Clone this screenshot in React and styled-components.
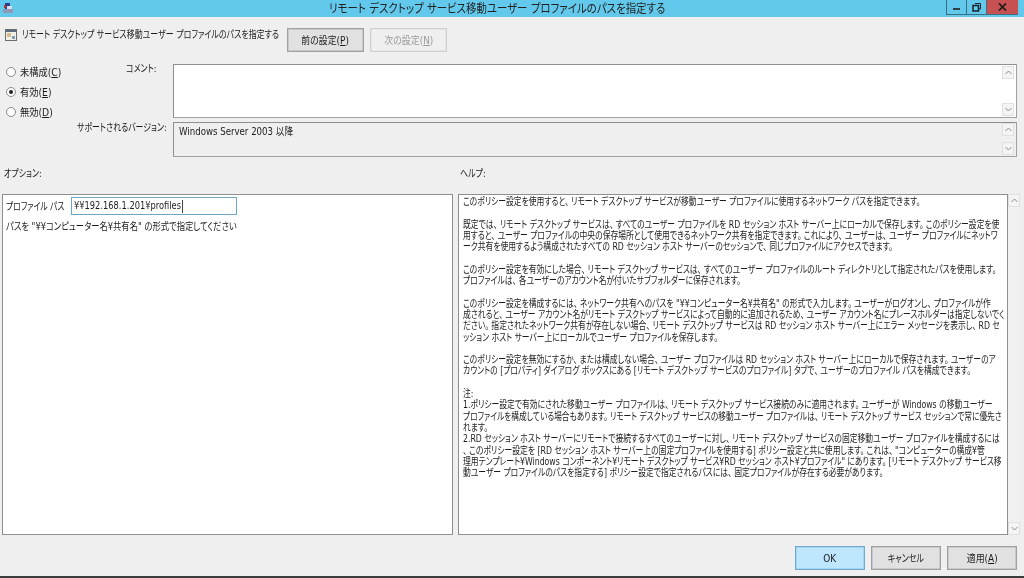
import React from 'react';
import styled, { createGlobalStyle } from 'styled-components';

const GlobalStyle = createGlobalStyle`
  html, body {
    margin: 0;
    padding: 0;
    background: #efefef;
  }
  * {
    box-sizing: border-box;
  }
`;

const Window = styled.div`
  width: 1024px;
  height: 578px;
  display: flex;
  flex-direction: column;
  overflow: hidden;
  background: #efefef;
  border-bottom: 2px solid #3c3c3c;
  color: #1c1c1c;
  font-family: "DejaVu Sans", "Noto Sans CJK JP", sans-serif;
  font-feature-settings: "palt";
  font-size: 10.5px;
  line-height: 12px;
  filter: blur(0.3px);
`;

// Meiryo UI has tall narrow kana, so every label is squeezed sideways
const Narrow = styled.span`
  display: inline-block;
  white-space: nowrap;
  transform: scaleX(${props => props.$x || 0.76});
  transform-origin: ${props => props.$center ? 'center' : 'left'};
`;

const Punct = styled.span`
  padding-right: 3px;
`;

const TitleBar = styled.div`
  height: 17px;
  flex: none;
  display: flex;
  align-items: flex-start;
  background: #63c9ec;
  padding: 0 6px 0 2px;
`;

const TitleIcon = styled.svg`
  width: 12px;
  height: 12px;
  margin-top: 2px;
  flex: none;
`;

const TitleText = styled.div`
  flex: 1;
  display: flex;
  justify-content: center;
  font-size: 12px;
  line-height: 18px;
  padding-left: 34px;
  color: #222;
`;

const WindowButtons = styled.div`
  display: flex;
  height: 15px;
  flex: none;
  border: 1px solid #3f6d80;
  border-top: 0;
  border-right: 0;
`;

const WindowButton = styled.div`
  width: ${props => props.$wide ? '31px' : '20px'};
  display: flex;
  align-items: center;
  justify-content: center;
  background: ${props => props.$close ? '#c75050' : 'transparent'};
  border-right: ${props => props.$close ? '0' : '1px solid #3f6d80'};
`;

const HeaderRow = styled.div`
  height: 47px;
  flex: none;
  display: flex;
  align-items: flex-start;
  padding: 11px 0 0 5px;
`;

const PolicyIcon = styled.svg`
  width: 12px;
  height: 12px;
  margin-top: 1px;
  flex: none;
`;

const PolicyName = styled.div`
  width: 270px;
  flex: none;
  padding-left: 5px;
`;

const NavButtons = styled.div`
  display: flex;
  gap: 6px;
`;

const Button = styled.div`
  width: ${props => props.$width || 70}px;
  height: 24px;
  display: flex;
  align-items: center;
  justify-content: center;
  background: ${props => props.$primary ? '#bee6fd' : props.$disabled ? '#efefef' : '#e1e1e1'};
  border: 1px solid ${props => props.$primary ? '#6fa9cf' : props.$disabled ? '#d0d0d0' : '#a0a0a0'};
  color: ${props => props.$disabled ? '#9a9a9a' : 'inherit'};
  box-shadow: inset 0 0 0 0.5px ${props => props.$primary ? '#8ec3e2' : props.$disabled ? '#dcdcdc' : '#b4b4b4'};
`;

const Underline = styled.span`
  text-decoration: underline;
  text-underline-offset: 1px;
`;

const SettingsRow = styled.div`
  display: flex;
  flex: none;
`;

const RadioGroup = styled.div`
  width: 70px;
  flex: none;
  display: flex;
  flex-direction: column;
  gap: 8px;
  padding: 2px 0 0 6px;
`;

const RadioRow = styled.div`
  display: flex;
  align-items: center;
  gap: 4px;
  height: 12px;
`;

const RadioDot = styled.span`
  width: 10px;
  height: 10px;
  flex: none;
  display: flex;
  align-items: center;
  justify-content: center;
  border-radius: 50%;
  background: #fff;
  border: 1px solid #8a8a8a;

  &::after {
    content: '';
    width: 4px;
    height: 4px;
    border-radius: 50%;
    background: ${props => props.$checked ? '#222' : 'transparent'};
  }
`;

const FieldGrid = styled.div`
  display: grid;
  grid-template-columns: 103px 844px;
  grid-template-rows: 54px 35px;
  row-gap: 4px;
`;

const FieldLabel = styled.div`
  padding-left: ${props => props.$left}px;
  margin-top: ${props => props.$lift ? -props.$lift : 0}px;
  overflow: visible;
  width: 103px;
`;

const FieldBox = styled.div`
  display: flex;
  justify-content: space-between;
  background: ${props => props.$white ? '#fff' : '#efefef'};
  border: 1px solid #a0a0a0;
  border-top-color: #8f8f8f;
  border-left-color: #8f8f8f;
  padding: ${props => props.$white ? '1px' : '0'} 1px 1px 1px;
`;

const BoxText = styled.div`
  padding: 2px 0 0 4px;
  overflow: visible;
  width: 300px;
`;

const ScrollBar = styled.div`
  width: 12px;
  flex: none;
  display: flex;
  flex-direction: column;
  justify-content: space-between;
  background: ${props => props.$plain ? '#f0f0f0' : '#fff'};
  margin-right: ${props => props.$inset || 0}px;
`;

const ScrollButton = styled.div`
  height: 13px;
  display: flex;
  align-items: center;
  justify-content: center;
  background: #f4f4f4;
  border: 1px solid #e0e0e0;
`;

const Chevron = ({ down }) => (
  <svg width="7" height="5" viewBox="0 0 7 5">
    <path d={down ? 'M0.5 1 L3.5 4 L6.5 1' : 'M0.5 4 L3.5 1 L6.5 4'} fill="none" stroke="#8a8a8a" strokeWidth="1" />
  </svg>
);

const Scroller = ({ inset, plain }) => (
  <ScrollBar $inset={inset} $plain={plain}>
    <ScrollButton><Chevron /></ScrollButton>
    <ScrollButton><Chevron down /></ScrollButton>
  </ScrollBar>
);

const SectionLabels = styled.div`
  height: 37px;
  flex: none;
  display: flex;
  padding: 10px 0 0 4px;
`;

const SectionLabel = styled.div`
  width: ${props => props.$width}px;
`;

const Panels = styled.div`
  height: 341px;
  flex: none;
  display: flex;
  gap: 5px;
  padding-left: 2px;
`;

const OptionsPanel = styled.div`
  width: 451px;
  background: #fff;
  border: 1px solid #8f8f8f;
  padding: 2px 0 0 3px;
`;

const PathRow = styled.div`
  display: flex;
  align-items: center;
`;

const PathLabel = styled.div`
  width: 65px;
  flex: none;
`;

const PathInput = styled.div`
  width: 166px;
  height: 18px;
  display: flex;
  align-items: center;
  padding-left: 2px;
  border: 1px solid #6fa5c8;
`;

const Caret = styled.span`
  display: inline-block;
  width: 1px;
  height: 13px;
  margin-left: 1px;
  vertical-align: middle;
  background: #111;
`;

const PathHint = styled.div`
  margin-top: 5px;
`;

const HelpWrap = styled.div`
  width: 561px;
  display: flex;
`;

const HelpPanel = styled.div`
  width: 550px;
  flex: none;
  background: #fff;
  border: 1px solid #8f8f8f;
  padding: 1px 0 0 4px;
  font-size: 10.4px;
  line-height: 11.3px;
`;

const HelpLine = styled.div`
  height: 11.3px;
`;

const Footer = styled.div`
  flex: 1;
  display: flex;
  justify-content: flex-end;
  gap: 6px;
  padding: 11px 7px 0 0;
`;

const helpLines = [
  'このポリシー設定を使用すると、リモート デスクトップ サービスが移動ユーザー プロファイルに使用するネットワーク パスを指定できます。',
  '',
  '既定では、リモート デスクトップ サービスは、すべてのユーザー プロファイルを RD セッション ホスト サーバー上にローカルで保存します。このポリシー設定を使',
  '用すると、ユーザー プロファイルの中央の保存場所として使用できるネットワーク共有を指定できます。これにより、ユーザーは、ユーザー プロファイルにネットワ',
  'ーク共有を使用するよう構成されたすべての RD セッション ホスト サーバーのセッションで、同じプロファイルにアクセスできます。',
  '',
  'このポリシー設定を有効にした場合、リモート デスクトップ サービスは、すべてのユーザー プロファイルのルート ディレクトリとして指定されたパスを使用します。',
  'プロファイルは、各ユーザーのアカウント名が付いたサブフォルダーに保存されます。',
  '',
  'このポリシー設定を構成するには、ネットワーク共有へのパスを "¥¥コンピューター名¥共有名" の形式で入力します。ユーザーがログオンし、プロファイルが作',
  '成されると、ユーザー アカウント名がリモート デスクトップ サービスによって自動的に追加されるため、ユーザー アカウント名にプレースホルダーは指定しないでく',
  'ださい。指定されたネットワーク共有が存在しない場合、リモート デスクトップ サービスは RD セッション ホスト サーバー上にエラー メッセージを表示し、RD セ',
  'ッション ホスト サーバー上にローカルでユーザー プロファイルを保存します。',
  '',
  'このポリシー設定を無効にするか、または構成しない場合、ユーザー プロファイルは RD セッション ホスト サーバー上にローカルで保存されます。ユーザーのア',
  'カウントの [プロパティ] ダイアログ ボックスにある [リモート デスクトップ サービスのプロファイル] タブで、ユーザーのプロファイル パスを構成できます。',
  '',
  '注:',
  '1.ポリシー設定で有効にされた移動ユーザー プロファイルは、リモート デスクトップ サービス接続のみに適用されます。ユーザーが Windows の移動ユーザー',
  'プロファイルを構成している場合もあります。リモート デスクトップ サービスの移動ユーザー プロファイルは、リモート デスクトップ サービス セッションで常に優先さ',
  'れます。',
  '2.RD セッション ホスト サーバーにリモートで接続するすべてのユーザーに対し、リモート デスクトップ サービスの固定移動ユーザー プロファイルを構成するには',
  '、このポリシー設定を [RD セッション ホスト サーバー上の固定プロファイルを使用する] ポリシー設定と共に使用します。これは、"コンピューターの構成¥管',
  '理用テンプレート¥Windows コンポーネント¥リモート デスクトップ サービス¥RD セッション ホスト¥プロファイル" にあります。[リモート デスクトップ サービス移',
  '動ユーザー プロファイルのパスを指定する] ポリシー設定で指定されるパスには、固定プロファイルが存在する必要があります。'
];

// 、 and 。 keep their full width in the original font, palt would close them up
const withPunct = (line) =>
  line.split(/(?<=[、。])/).map((part, i) =>
    /[、。]$/.test(part)
      ? <React.Fragment key={i}>{part.slice(0, -1)}<Punct>{part.slice(-1)}</Punct></React.Fragment>
      : <React.Fragment key={i}>{part}</React.Fragment>
  );

const App = () => (
  <>
    <GlobalStyle />
    <Window>
      <TitleBar>
        <TitleIcon viewBox="0 0 12 12">
          <rect x="1" y="7" width="10" height="4" fill="#8c9bb5" />
          <rect x="3" y="1" width="5" height="6" fill="#2b3f8f" />
          <rect x="5" y="4" width="5" height="3" fill="#d8dfe8" />
          <rect x="2" y="3" width="2" height="3" fill="#a33" />
        </TitleIcon>
        <TitleText>
          <Narrow $x={0.87} $center>リモート デスクトップ サービス移動ユーザー プロファイルのパスを指定する</Narrow>
        </TitleText>
        <WindowButtons>
          <WindowButton>
            <svg width="8" height="8" viewBox="0 0 8 8"><rect x="0" y="5" width="7" height="2" fill="#2c3e46" /></svg>
          </WindowButton>
          <WindowButton>
            <svg width="9" height="9" viewBox="0 0 9 9">
              <path d="M3 0.5h5.5v5.5h-2" fill="none" stroke="#1d2b33" strokeWidth="1" />
              <rect x="1" y="2.5" width="5.5" height="5.5" fill="none" stroke="#1d2b33" strokeWidth="1.6" />
            </svg>
          </WindowButton>
          <WindowButton $wide $close>
            <svg width="9" height="8" viewBox="0 0 9 8">
              <path d="M1 0.5 L8 7.5 M8 0.5 L1 7.5" stroke="#1b1b1b" strokeWidth="1.7" />
            </svg>
          </WindowButton>
        </WindowButtons>
      </TitleBar>

      <HeaderRow>
        <PolicyIcon viewBox="0 0 12 12">
          <rect x="0.5" y="0.5" width="11" height="11" fill="#f3f1e6" stroke="#6c6c6c" />
          <rect x="1" y="1" width="10" height="2" fill="#5a6a80" />
          <rect x="2" y="4.5" width="4" height="1" fill="#b58a3c" />
          <rect x="2" y="6.5" width="4" height="1" fill="#b58a3c" />
          <rect x="7" y="7" width="3" height="3" fill="#7f9fc0" />
        </PolicyIcon>
        <PolicyName>
          <Narrow>リモート デスクトップ サービス移動ユーザー プロファイルのパスを指定する</Narrow>
        </PolicyName>
        <NavButtons>
          <Button $width={77}><Narrow $x={0.85} $center>前の設定(<Underline>P</Underline>)</Narrow></Button>
          <Button $width={77} $disabled><Narrow $x={0.85} $center>次の設定(<Underline>N</Underline>)</Narrow></Button>
        </NavButtons>
      </HeaderRow>

      <SettingsRow>
        <RadioGroup>
          <RadioRow><RadioDot /><Narrow $x={0.88}>未構成(<Underline>C</Underline>)</Narrow></RadioRow>
          <RadioRow><RadioDot $checked /><Narrow $x={0.88}>有効(<Underline>E</Underline>)</Narrow></RadioRow>
          <RadioRow><RadioDot /><Narrow $x={0.88}>無効(<Underline>D</Underline>)</Narrow></RadioRow>
        </RadioGroup>
        <FieldGrid>
          <FieldLabel $left={56} $lift={2}><Narrow>コメント:</Narrow></FieldLabel>
          <FieldBox $white>
            <span />
            <Scroller inset={1} />
          </FieldBox>
          <FieldLabel $left={7} $lift={1}><Narrow $x={0.755}>サポートされるバージョン:</Narrow></FieldLabel>
          <FieldBox>
            <BoxText><Narrow $x={0.82}>Windows Server 2003 以降</Narrow></BoxText>
            <Scroller inset={1} plain />
          </FieldBox>
        </FieldGrid>
      </SettingsRow>

      <SectionLabels>
        <SectionLabel $width={456}><Narrow>オプション:</Narrow></SectionLabel>
        <SectionLabel $width={100}><Narrow>ヘルプ:</Narrow></SectionLabel>
      </SectionLabels>

      <Panels>
        <OptionsPanel>
          <PathRow>
            <PathLabel><Narrow $x={0.74}>プロファイル パス</Narrow></PathLabel>
            <PathInput><Narrow $x={0.79}>¥¥192.168.1.201¥profiles<Caret /></Narrow></PathInput>
          </PathRow>
          <PathHint><Narrow $x={0.79}>パスを "¥¥コンピューター名¥共有名" の形式で指定してください</Narrow></PathHint>
        </OptionsPanel>
        <HelpWrap>
          <HelpPanel>
            {helpLines.map((line, i) => <HelpLine key={i}><Narrow $x={i === 19 ? 0.74 : 0.75}>{withPunct(line)}</Narrow></HelpLine>)}
          </HelpPanel>
          <Scroller plain />
        </HelpWrap>
      </Panels>

      <Footer>
        <Button $primary><Narrow $x={0.85} $center>OK</Narrow></Button>
        <Button><Narrow $x={0.76} $center>キャンセル</Narrow></Button>
        <Button><Narrow $x={0.85} $center>適用(<Underline>A</Underline>)</Narrow></Button>
      </Footer>
    </Window>
  </>
);

export default App;
